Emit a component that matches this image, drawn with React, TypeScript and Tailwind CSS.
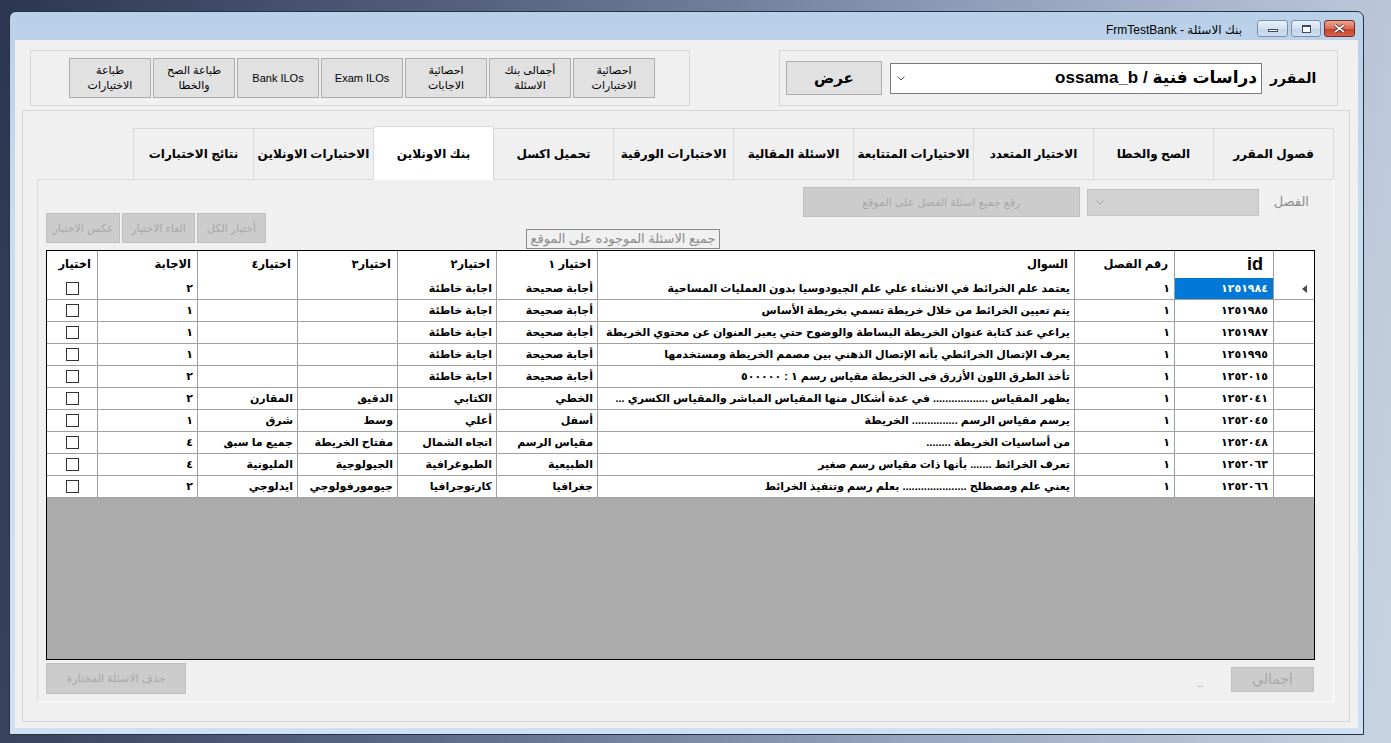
import React from "react";

// بيانات الجدول
type Question = {
  id: string;
  fasl: string;
  text: string;
  c1: string;
  c2: string;
  c3: string;
  c4: string;
  answer: string;
};

const questions: Question[] = [
  { id: "١٢٥١٩٨٤", fasl: "١", text: "يعتمد علم الخرائط في الانشاء علي علم الجيودوسيا بدون العمليات المساحية", c1: "أجابة صحيحة", c2: "اجابة خاطئة", c3: "", c4: "", answer: "٢" },
  { id: "١٢٥١٩٨٥", fasl: "١", text: "يتم تعيين الخرائط من خلال خريطة تسمي بخريطة الأساس", c1: "أجابة صحيحة", c2: "اجابة خاطئة", c3: "", c4: "", answer: "١" },
  { id: "١٢٥١٩٨٧", fasl: "١", text: "يراعي عند كتابة عنوان الخريطة البساطة والوضوح حتي يعبر العنوان عن محتوي الخريطة", c1: "أجابة صحيحة", c2: "اجابة خاطئة", c3: "", c4: "", answer: "١" },
  { id: "١٢٥١٩٩٥", fasl: "١", text: "يعرف الإتصال الخرائطي بأنه الإتصال الذهني بين مصمم الخريطة ومستخدمها", c1: "أجابة صحيحة", c2: "اجابة خاطئة", c3: "", c4: "", answer: "١" },
  { id: "١٢٥٢٠١٥", fasl: "١", text: "تأخذ الطرق اللون الأزرق فى الخريطة مقياس رسم ١ : ٥٠٠٠٠٠", c1: "أجابة صحيحة", c2: "اجابة خاطئة", c3: "", c4: "", answer: "٢" },
  { id: "١٢٥٢٠٤١", fasl: "١", text: "يظهر  المقياس .................. في عدة أشكال منها المقياس المباشر والمقياس الكسري ...", c1: "الخطي", c2: "الكتابي", c3: "الدقيق", c4: "المقارن", answer: "٢" },
  { id: "١٢٥٢٠٤٥", fasl: "١", text: "يرسم مقياس الرسم ............... الخريطة", c1: "أسفل", c2: "أعلي", c3: "وسط", c4: "شرق", answer: "١" },
  { id: "١٢٥٢٠٤٨", fasl: "١", text: "من أساسيات الخريطة ........", c1: "مقياس الرسم", c2: "اتجاه الشمال", c3: "مفتاح الخريطة", c4: "جميع ما سبق", answer: "٤" },
  { id: "١٢٥٢٠٦٣", fasl: "١", text: "تعرف الخرائط ....... بأنها ذات مقياس رسم صغير", c1: "الطبيعية", c2: "الطبوغرافية", c3: "الجيولوجية", c4: "المليونية", answer: "٤" },
  { id: "١٢٥٢٠٦٦", fasl: "١", text: "يعني علم ومصطلح ..................... بعلم رسم وتنفيذ الخرائط", c1: "جغرافيا", c2: "كارتوجرافيا", c3: "جيومورفولوجي", c4: "ايدلوجي", answer: "٢" },
];

const tabs = [
  "فصول المقرر",
  "الصح والخطا",
  "الاختيار المتعدد",
  "الاختيارات المتتابعة",
  "الاسئلة المقالية",
  "الاختبارات الورقية",
  "تحميل اكسل",
  "بنك الاونلاين",
  "الاختبارات الاونلاين",
  "نتائج الاختبارات",
];

const headers = ["", "id", "رقم الفصل", "السوال", "اختيار ١", "اختيار٢", "اختيار٣", "اختيار٤", "الاجابة", "اختيار"];

// الاعمدة من اليمين لليسار
const gridCols = "grid grid-cols-[41px_99px_100px_477px_101px_99px_100px_100px_100px_50px]";

const Chevron = ({ color = "#555" }: { color?: string }) => (
  <svg width="8" height="5" viewBox="0 0 8 5">
    <polyline points="0.5,0.5 4,4 7.5,0.5" fill="none" stroke={color} strokeWidth="1" />
  </svg>
);

const TitleBar = () => (
  <div className="h-[28px] flex justify-end items-start shrink-0">
    <span dir="ltr" className="mt-[9px] mr-[15px] text-[12px] text-black">
      FrmTestBank - بنك الاسئلة
    </span>
    <div className="flex gap-[3px] mt-[8px] mr-[8px]">
      <div className="w-[31px] h-[17px] rounded-[3px] border border-[#7d8fa8] bg-[linear-gradient(180deg,#e8f0f9_0%,#d3e1f0_50%,#c1d3e8_51%,#cfdff0_100%)] flex items-end justify-center pb-[4px]">
        <div className="w-[10px] h-[3px] bg-white border border-[#3c4b5f]" />
      </div>
      <div className="w-[30px] h-[17px] rounded-[3px] border border-[#7d8fa8] bg-[linear-gradient(180deg,#e8f0f9_0%,#d3e1f0_50%,#c1d3e8_51%,#cfdff0_100%)] flex items-center justify-center">
        <div className="w-[9px] h-[8px] bg-white border border-[#3c4b5f] border-t-2" />
      </div>
      <div className="w-[31px] h-[17px] rounded-[3px] border border-[#7a2a20] bg-[linear-gradient(180deg,#e9a493_0%,#d96e58_50%,#c4402a_51%,#d5604a_100%)] flex items-center justify-center">
        <svg width="11" height="9" viewBox="0 0 11 9">
          <path d="M1 1 L10 8 M10 1 L1 8" stroke="#3a1410" strokeWidth="3" />
          <path d="M1 1 L10 8 M10 1 L1 8" stroke="#ffffff" strokeWidth="1.6" />
        </svg>
      </div>
    </div>
  </div>
);

const ToolButton = ({ lines }: { lines: string[] }) => (
  <div className="w-[82px] h-[40px] bg-[#e1e1e1] border border-[#adadad] flex flex-col items-center justify-center text-[11px] leading-[15px] text-center">
    {lines.map((l) => (
      <span key={l}>{l}</span>
    ))}
  </div>
);

const DisabledButton = ({ label, className = "" }: { label: string; className?: string }) => (
  <div className={`bg-[#cccccc] border border-[#bfbfbf] text-[#a8a8a8] flex items-center justify-center text-[11px] ${className}`}>
    {label}
  </div>
);

const QuestionGrid = () => (
  <div dir="rtl" className="ml-[8px] w-[1269px] h-[410px] border border-black bg-[#ababab] flex flex-col overflow-hidden">
    <div className={`${gridCols} h-[27px] bg-white shrink-0`}>
      {headers.map((h, i) => (
        <div
          key={i}
          className={`border-b border-[#a0a0a0] px-[6px] flex items-center font-bold whitespace-nowrap ${i < headers.length - 1 ? "border-l" : ""} ${i === 1 ? "text-[18px] pr-[10px]" : "text-[11.5px]"}`}
        >
          {h}
        </div>
      ))}
    </div>
    {questions.map((q, r) => {
      const cells = [q.id, q.fasl, q.text, q.c1, q.c2, q.c3, q.c4, q.answer];
      return (
        <div key={q.id} className={`${gridCols} h-[22px] bg-white shrink-0`}>
          <div className="border-l border-b border-[#a0a0a0] flex items-center pr-[7px]">
            {r === 0 && (
              <svg width="5" height="8" viewBox="0 0 5 8">
                <polygon points="5,0 0,4 5,8" fill="#4a4a4a" />
              </svg>
            )}
          </div>
          {cells.map((c, i) => (
            <div
              key={i}
              className={`border-l border-b border-[#a0a0a0] px-[4px] leading-[21px] text-[11px] font-bold truncate ${i === 0 ? "tracking-[2.5px] pr-[5px]" : ""} ${r === 0 && i === 0 ? "bg-[#0078d7] text-white" : ""}`}
            >
              {c}
            </div>
          ))}
          <div className="border-b border-[#a0a0a0] flex items-center justify-center">
            <div className="w-[13px] h-[13px] border border-[#333333] bg-white" />
          </div>
        </div>
      );
    })}
  </div>
);

export default function App() {
  return (
    <div className="w-[1391px] h-[743px] overflow-hidden bg-[linear-gradient(100deg,#2c3650_0%,#5a6785_35%,#9aa8c2_70%,#c9d4e2_100%)] pl-[9px] pt-[11px] font-['Liberation_Sans','DejaVu_Sans',sans-serif] text-black">
      <div className="w-[1355px] h-[724px] rounded-t-[7px] border border-[#26313f] bg-[linear-gradient(180deg,#b9d0e9_0%,#c9dcf0_30%,#cfe0f2_100%)] flex flex-col">
        <TitleBar />

        {/* Client area */}
        <div className="mx-[5px] h-[688px] bg-[#f0f0f0] flex flex-col">
          {/* Top panels */}
          <div className="mt-[10px] h-[56px] flex justify-between pl-[15px] pr-[20px] shrink-0">
            <div className="w-[660px] h-[56px] border border-[#d6d6d6] flex gap-[2px] pl-[38px] pt-[7px]">
              <ToolButton lines={["طباعة", "الاختيارات"]} />
              <ToolButton lines={["طباعة الصح", "والخطا"]} />
              <ToolButton lines={["Bank ILOs"]} />
              <ToolButton lines={["Exam ILOs"]} />
              <ToolButton lines={["احصائية", "الاجابات"]} />
              <ToolButton lines={["أجمالى بنك", "الاسئلة"]} />
              <ToolButton lines={["احصائية", "الاختبارات"]} />
            </div>
            <div className="w-[559px] h-[56px] border border-[#d6d6d6] flex items-center pl-[6px]">
              <div className="w-[96px] h-[34px] bg-[#e1e1e1] border border-[#adadad] flex items-center justify-center text-[15px] font-bold">
                عرض
              </div>
              <div className="ml-[8px] w-[372px] h-[31px] bg-white border border-[#7a7a7a] flex items-center justify-between pl-[6px] pr-[4px]">
                <Chevron />
                <span dir="rtl" className="text-[17px] font-bold">
                  دراسات فنية / ossama_b
                </span>
              </div>
              <span className="ml-[8px] text-[14px] font-bold">المقرر</span>
            </div>
          </div>

          {/* Outer panel with tab control */}
          <div className="mt-[4px] ml-[7px] mr-[8px] h-[612px] border border-[#d6d6d6] pt-[15px] pl-[14px] pr-[15px] shrink-0">
            <div className="w-[1297px]">
              <div dir="rtl" className="flex items-end h-[53px]">
                {tabs.map((t) => {
                  const active = t === "بنك الاونلاين";
                  return (
                    <div
                      key={t}
                      className={`w-[121px] -ml-px border border-b-0 border-[#d9d9d9] flex items-center justify-center text-[12px] font-bold whitespace-nowrap ${active ? "h-[54px] bg-white relative z-10 -mb-px" : "h-[51px] bg-[#f0f0f0]"}`}
                    >
                      {t}
                    </div>
                  );
                })}
              </div>

              {/* Tab page */}
              <div className="h-[523px] border border-[#d9d9d9] border-r-white border-b-white bg-[#f0f0f0] flex flex-col">
                <div dir="rtl" className="mt-[7px] h-[30px] flex items-center pr-[24px] shrink-0">
                  <span className="text-[13px] text-[#8d8d8d]">الفصل</span>
                  <div className="mr-[15px] w-[172px] h-[27px] bg-[#d2d2d2] border border-[#c2c2c2] flex items-center justify-end pl-[8px]">
                    <Chevron color="#a0a0a0" />
                  </div>
                  <DisabledButton label="رفع جميع اسئلة الفصل على الموقع" className="mr-[7px] w-[277px] h-[30px]" />
                </div>

                <div className="-mt-[4px] h-[37px] flex pl-[8px] shrink-0">
                  <div className="flex gap-[2px] h-[30px]">
                    <DisabledButton label="عكس الاختيار" className="w-[74px] h-[30px]" />
                    <DisabledButton label="الغاء الاختيار" className="w-[73px] h-[30px]" />
                    <DisabledButton label="أختيار الكل" className="w-[69px] h-[30px]" />
                  </div>
                  <div className="ml-[260px] mt-[16px] w-[194px] h-[20px] border border-[#8a8a8a] flex items-center justify-center text-[13px] text-[#8d8d8d]">
                    جميع الاسئلة الموجوده على الموقع
                  </div>
                </div>

                <QuestionGrid />

                <div className="mt-[3px] flex justify-between pl-[8px] pr-[19px] shrink-0">
                  <DisabledButton label="حذف الاسئلة المختارة" className="w-[140px] h-[31px]" />
                  <div className="flex items-start mt-[4px]">
                    <span className="mt-[8px] mr-[28px] text-[11px] text-[#8d8d8d]">..</span>
                    <DisabledButton label="اجمالي" className="w-[83px] h-[25px] !text-[14px]" />
                  </div>
                </div>
              </div>
            </div>
          </div>
        </div>
      </div>
    </div>
  );
}
